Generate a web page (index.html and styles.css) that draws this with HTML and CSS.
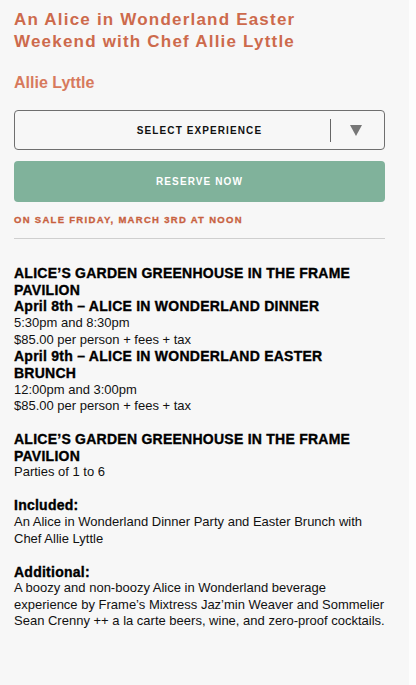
FILE: index.html
```html
<!DOCTYPE html>
<html lang="en">
<head>
<meta charset="utf-8">
<title>An Alice in Wonderland Easter Weekend</title>
<link rel="stylesheet" href="styles.css">
</head>
<body>
<main class="page">
  <h1 class="title">An Alice in Wonderland Easter Weekend with Chef Allie Lyttle</h1>
  <h2 class="chef">Allie Lyttle</h2>
  <div class="select">
    <span class="select-label">SELECT EXPERIENCE</span>
    <span class="select-divider"></span>
    <span class="select-arrow">
      <svg width="12" height="11" viewBox="0 0 12 11"><polygon points="0,0 12,0 6,11" fill="#777"/></svg>
    </span>
  </div>
  <button class="reserve" type="button">RESERVE NOW</button>
  <p class="sale">ON SALE FRIDAY, MARCH 3RD AT NOON</p>
  <hr class="rule">
  <section class="details">
    <div class="block">
      <h3 class="head">ALICE’S GARDEN GREENHOUSE IN THE FRAME PAVILION</h3>
      <h3 class="head">April 8th – ALICE IN WONDERLAND DINNER</h3>
      <p class="text">5:30pm and 8:30pm</p>
      <p class="text">$85.00 per person + fees + tax</p>
      <h3 class="head">April 9th – ALICE IN WONDERLAND EASTER BRUNCH</h3>
      <p class="text">12:00pm and 3:00pm</p>
      <p class="text">$85.00 per person + fees + tax</p>
    </div>
    <div class="block">
      <h3 class="head">ALICE’S GARDEN GREENHOUSE IN THE FRAME PAVILION</h3>
      <p class="text">Parties of 1 to 6</p>
    </div>
    <div class="block">
      <h3 class="head">Included:</h3>
      <p class="text">An Alice in Wonderland Dinner Party and Easter Brunch with Chef Allie Lyttle</p>
    </div>
    <div class="block">
      <h3 class="head">Additional:</h3>
      <p class="text">A boozy and non-boozy Alice in Wonderland beverage experience by Frame’s Mixtress Jaz’min Weaver and Sommelier Sean Crenny ++ a la carte beers, wine, and zero-proof cocktails.</p>
    </div>
  </section>
</main>
</body>
</html>
```
FILE: styles.css
```css
html {
  background: #fdfdfd;
}
body {
  margin: 0;
  font-family: "Liberation Sans", Arial, sans-serif;
  color: #000;
}
.page {
  width: 409px;
  min-height: 685px;
  box-sizing: border-box;
  background: #f7f7f7;
  padding: 9px 24px 20px 14px;
}
.title {
  margin: 0;
  max-width: 340px;
  font-size: 17px;
  line-height: 22px;
  font-weight: bold;
  letter-spacing: 1.2px;
  color: #cd6a4c;
}
.chef {
  margin: 20px 0 0;
  font-size: 16px;
  line-height: 20px;
  font-weight: bold;
  color: #d77a5d;
}
.select {
  margin-top: 17px;
  height: 40px;
  box-sizing: border-box;
  border: 1px solid #6f6f6f;
  border-radius: 4px;
  display: flex;
  align-items: center;
}
.select-label {
  flex: 1;
  padding-left: 54px;
  text-align: center;
  font-size: 10px;
  font-weight: bold;
  letter-spacing: 1.1px;
  color: #111;
}
.select-divider {
  width: 1px;
  height: 23px;
  background: #666;
}
.select-arrow {
  width: 53px;
  display: flex;
  justify-content: center;
  align-items: center;
  padding-right: 4px;
  box-sizing: border-box;
}
.select-arrow svg {
  display: block;
}
.reserve {
  display: block;
  width: 100%;
  height: 41px;
  margin-top: 11px;
  border: 0;
  border-radius: 4px;
  background: #80b29b;
  color: #fff;
  font-family: "Liberation Sans", Arial, sans-serif;
  font-size: 10px;
  font-weight: bold;
  letter-spacing: 1.1px;
}
.sale {
  margin: 12px 0 0;
  font-size: 9.5px;
  line-height: 12px;
  font-weight: bold;
  letter-spacing: 1.3px;
  color: #c8613f;
  -webkit-text-stroke: 0.3px #c8613f;
}
.rule {
  margin: 12px 0 0;
  border: 0;
  border-top: 1px solid #cfcfcf;
  height: 0;
}
.details {
  padding-top: 26px;
  display: flex;
  flex-direction: column;
  gap: 16.5px;
}
.head {
  margin: 0;
  font-size: 14px;
  line-height: 16.7px;
  font-weight: bold;
  letter-spacing: 0.25px;
  -webkit-text-stroke: 0.35px #000;
}
.text {
  margin: 0;
  font-size: 13px;
  line-height: 16.5px;
  color: #111;
}
```
